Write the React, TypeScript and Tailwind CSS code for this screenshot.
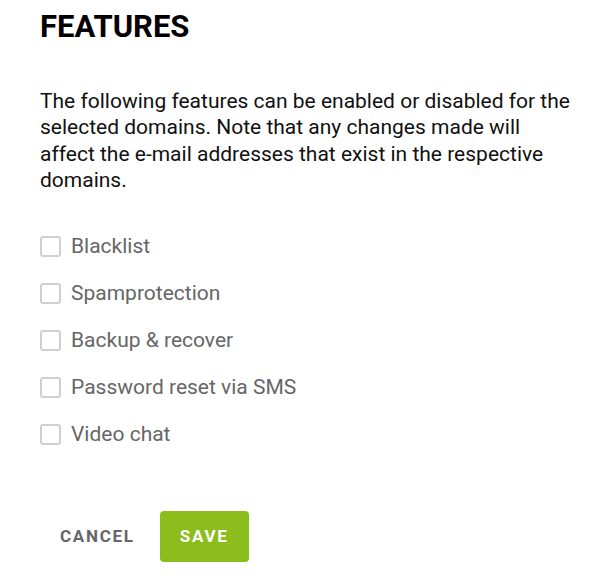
const features = [
  "Blacklist",
  "Spamprotection",
  "Backup & recover",
  "Password reset via SMS",
  "Video chat",
];

export default function App() {
  return (
    <div className="min-h-screen bg-white px-10 pt-[8px] font-['Roboto',sans-serif]">
      <h1 className="text-[31px] font-bold leading-[38px] text-black">FEATURES</h1>
      <p className="mt-[42px] w-[540px] text-[21px] leading-[26.3px] text-[#111]">
        The following features can be enabled or disabled for the selected domains. Note that any
        changes made will affect the e-mail addresses that exist in the respective domains.
      </p>
      <div className="mt-[40px] flex flex-col gap-[21px]">
        {features.map((name) => (
          <label key={name} className="flex h-[26px] items-center gap-[10px]">
            <input
              type="checkbox"
              className="h-[21px] w-[21px] appearance-none rounded-[3px] border-2 border-[#d0d0d0] bg-white"
            />
            <span className="text-[21px] leading-[26px] text-[#666]">{name}</span>
          </label>
        ))}
      </div>
      <div className="mt-[64px] flex items-center gap-[5px]">
        <button className="h-[51px] px-5 text-[17px] font-bold uppercase tracking-[0.1em] text-[#666]">
          Cancel
        </button>
        <button className="h-[51px] w-[89px] rounded-[4px] bg-[#8bbe1c] text-[17px] font-bold uppercase tracking-[0.1em] text-white">
          Save
        </button>
      </div>
    </div>
  );
}
